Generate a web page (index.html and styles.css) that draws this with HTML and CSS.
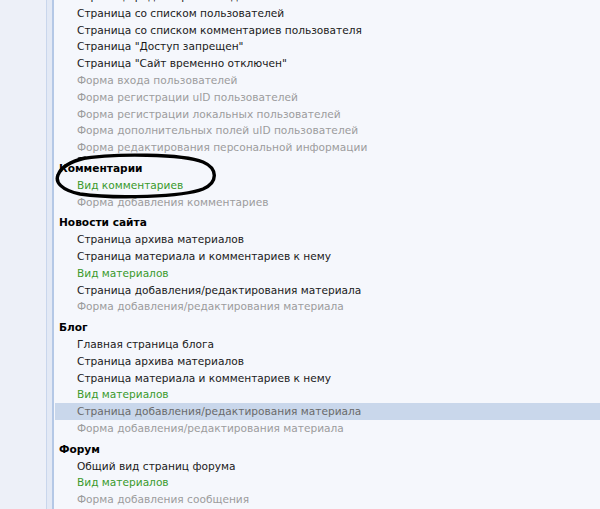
FILE: index.html
```html
<!DOCTYPE html>
<html lang="ru">
<head>
    <meta charset="UTF-8">
    <title>Шаблоны</title>
    <link rel="stylesheet" href="styles.css">
</head>
<body>

<div class="page">
    <div class="sidebar"></div>
    <div class="divider"></div>

    <div class="content">
        <ul class="tpl-list">
            <li class="item">Страница редактирования данных пользователя</li>
            <li class="item">Страница со списком пользователей</li>
            <li class="item">Страница со списком комментариев пользователя</li>
            <li class="item">Страница "Доступ запрещен"</li>
            <li class="item">Страница "Сайт временно отключен"</li>
            <li class="item off">Форма входа пользователей</li>
            <li class="item off">Форма регистрации uID пользователей</li>
            <li class="item off">Форма регистрации локальных пользователей</li>
            <li class="item off">Форма дополнительных полей uID пользователей</li>
            <li class="item off">Форма редактирования персональной информации</li>
        </ul>

        <div class="group">
            <h3>Комментарии</h3>
            <ul class="tpl-list">
                <li class="item green">Вид комментариев</li>
                <li class="item off">Форма добавления комментариев</li>
            </ul>
            <!-- hand-drawn circle around the comments block -->
            <svg class="mark" width="166" height="52" viewBox="0 0 166 52">
                <path d="M24 9 C 60 3, 128 4, 148 12 C 162 18, 164 32, 148 39 C 128 47, 60 49, 25 44 C 6 40, 0 32, 3 25 C 6 17, 14 12, 30 8" fill="none" stroke="#000" stroke-width="3.4" stroke-linecap="round"/>
            </svg>
        </div>

        <div class="group">
            <h3>Новости сайта</h3>
            <ul class="tpl-list">
                <li class="item">Страница архива материалов</li>
                <li class="item">Страница материала и комментариев к нему</li>
                <li class="item green">Вид материалов</li>
                <li class="item">Страница добавления/редактирования материала</li>
                <li class="item off">Форма добавления/редактирования материала</li>
            </ul>
        </div>

        <div class="group">
            <h3>Блог</h3>
            <ul class="tpl-list">
                <li class="item">Главная страница блога</li>
                <li class="item">Страница архива материалов</li>
                <li class="item">Страница материала и комментариев к нему</li>
                <li class="item green">Вид материалов</li>
                <li class="item selected">Страница добавления/редактирования материала</li>
                <li class="item off">Форма добавления/редактирования материала</li>
            </ul>
        </div>

        <div class="group">
            <h3>Форум</h3>
            <ul class="tpl-list">
                <li class="item">Общий вид страниц форума</li>
                <li class="item green">Вид материалов</li>
                <li class="item off">Форма добавления сообщения</li>
            </ul>
        </div>
    </div>
</div>

</body>
</html>
```

FILE: styles.css
```css
body {
    margin: 0;
    font-family: "DejaVu Sans", Verdana, sans-serif;
    font-size: 10.6px;
    color: #1a1a1a;
    background-color: #f5f7fc;
    overflow: hidden;
}

.page {
    display: flex;
    height: 509px;
}

.sidebar {
    width: 46px;
    background-color: #edf0f8;
}

.divider {
    width: 5px;
    border-left: 1px solid #c9d6ec;
    border-right: 2px solid #b4c8e6;
    background-color: #e3e9f5;
}

.content {
    flex: 1;
    padding-left: 1px;
    margin-top: -12px;
}

.tpl-list {
    list-style: none;
    margin: 0;
    padding: 0;
}

.item {
    height: 16.8px;
    line-height: 16.8px;
    padding-left: 22px;
    white-space: nowrap;
}

.off {
    color: #9c9c9c;
}

.green {
    color: #3a9a2c;
}

.selected {
    background-color: #c9d7eb;
    color: #6a6a6a;
}

.group {
    position: relative;
    margin-top: 4px;
}

.group h3 {
    margin: 0;
    padding-left: 4px;
    font-size: 10.6px;
    line-height: 16.8px;
    font-weight: bold;
    color: #000;
}

.mark {
    position: absolute;
    left: 0;
    top: -10px;
}
```
